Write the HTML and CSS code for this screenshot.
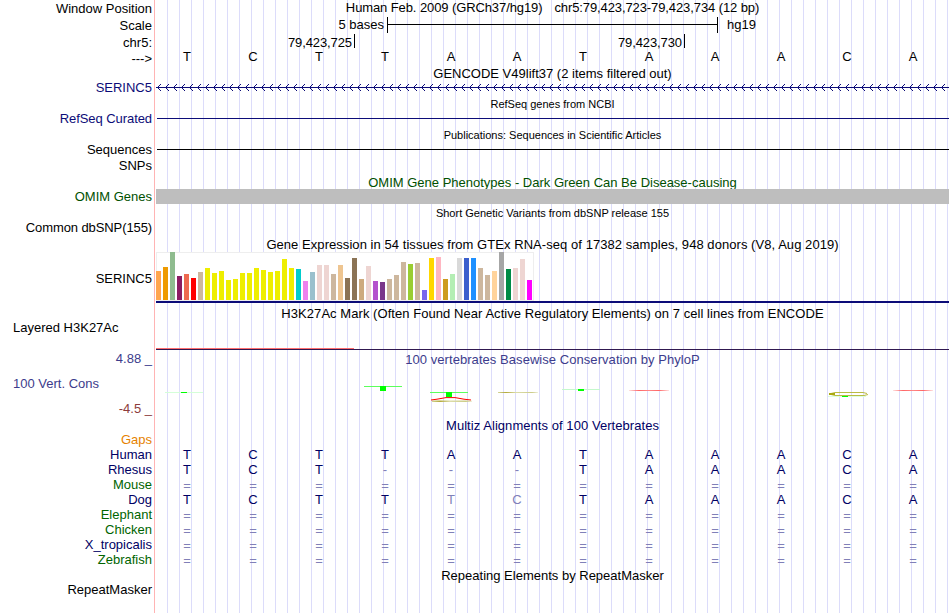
FILE: index.html
```html
<!DOCTYPE html>
<html lang="en">
<head>
  <meta charset="UTF-8">
  <title>Human chr5:79,423,723-79,423,734</title>
  <link rel="stylesheet" href="styles.css">
</head>
<body>
  <main class="browser">
    <section class="track ruler">
      <div class="labels">
        <div>Window Position</div>
        <div>Scale</div>
        <div>chr5:</div>
        <div class="strand">---&gt;</div>
      </div>
      <div class="data">
        <h2 class="position"><span>Human Feb. 2009 (GRCh37/hg19)</span><span>chr5:79,423,723-79,423,734 (12 bp)</span></h2>
        <div class="scale"><span class="scale-size">5 bases</span><span class="scale-bar"></span><span>hg19</span></div>
        <div class="ticks"><span class="tick first">79,423,725</span><span class="tick second">79,423,730</span></div>
        <div class="bases ref" data-seq="TCTTAATAAACA"></div>
      </div>
    </section>

    <section class="track gencode">
      <div class="labels navy"><div>SERINC5</div></div>
      <div class="data">
        <h2>GENCODE V49lift37 (2 items filtered out)</h2>
        <svg class="intron" width="793" height="7" shape-rendering="crispEdges">
          <defs>
            <pattern id="arrow" width="8" height="7" patternUnits="userSpaceOnUse">
              <path d="M1 3h1v1h-1zM2 2h1v1h-1zM3 1h1v1h-1zM4 0h1v1h-1zM2 4h1v1h-1zM3 5h1v1h-1zM4 6h1v1h-1zM0 3h8v1h-8z" fill="#0c0c78"/>
            </pattern>
          </defs>
          <rect width="793" height="7" fill="url(#arrow)"/>
        </svg>
      </div>
    </section>

    <section class="track refseq">
      <div class="labels navy"><div>RefSeq Curated</div></div>
      <div class="data">
        <h2 class="small">RefSeq genes from NCBI</h2>
        <div class="line navy-line"></div>
      </div>
    </section>

    <section class="track pubs">
      <div class="labels"><div>Sequences</div><div>SNPs</div></div>
      <div class="data">
        <h2 class="small">Publications: Sequences in Scientific Articles</h2>
        <div class="line"></div>
      </div>
    </section>

    <section class="track omim">
      <div class="labels green"><div>OMIM Genes</div></div>
      <div class="data">
        <h2 class="green">OMIM Gene Phenotypes - Dark Green Can Be Disease-causing</h2>
        <div class="omim-bar"></div>
      </div>
    </section>

    <section class="track dbsnp">
      <div class="labels"><div>Common dbSNP(155)</div></div>
      <div class="data">
        <h2 class="small">Short Genetic Variants from dbSNP release 155</h2>
      </div>
    </section>

    <section class="track gtex">
      <div class="labels"><div>SERINC5</div></div>
      <div class="data">
        <h2 class="wide">Gene Expression in 54 tissues from GTEx RNA-seq of 17382 samples, 948 donors (V8, Aug 2019)</h2>
        <div class="bars" id="bars"></div>
        <div class="gene-model"></div>
      </div>
    </section>

    <section class="track h3k">
      <div class="labels left"><div>Layered H3K27Ac</div></div>
      <div class="data">
        <h2 class="wide">H3K27Ac Mark (Often Found Near Active Regulatory Elements) on 7 cell lines from ENCODE</h2>
        <div class="signal"></div>
      </div>
    </section>

    <section class="track phylop">
      <div class="labels">
        <div class="max">4.88 _</div>
        <div class="name">100 Vert. Cons</div>
        <div class="min">-4.5 _</div>
      </div>
      <div class="data">
        <h2 class="wide">100 vertebrates Basewise Conservation by PhyloP</h2>
        <svg class="logo" width="793" height="24" viewBox="156 382 793 24">
          <defs>
            <linearGradient id="redFade"><stop offset="0" stop-color="#f66" stop-opacity=".2"/><stop offset=".25" stop-color="#f66"/><stop offset=".5" stop-color="#f88"/><stop offset=".75" stop-color="#f66"/><stop offset="1" stop-color="#f66" stop-opacity=".2"/></linearGradient>
            <linearGradient id="oliveFade"><stop offset="0" stop-color="#aa3" stop-opacity=".5"/><stop offset=".2" stop-color="#b4aa3c"/><stop offset=".45" stop-color="#dda"/><stop offset=".85" stop-color="#cc8"/><stop offset="1" stop-color="#cc8" stop-opacity=".3"/></linearGradient>
          </defs>
          <rect x="165" y="392" width="38" height="1" fill="#d4ffd8"/>
          <rect x="181" y="392" width="6" height="1" fill="#0f0"/>
          <rect x="364" y="386" width="38" height="1" fill="#5cff5c"/>
          <rect x="380" y="386" width="6" height="5" fill="#0f0"/>
          <rect x="430" y="392" width="38" height="1" fill="#5cff5c"/>
          <rect x="446" y="392" width="6" height="5" fill="#0f0"/>
          <path d="M431 400 L437 399.2 L446 397.6 H455 L464 399.2 L471 400" fill="none" stroke="#f00"/>
          <rect x="432" y="400.5" width="40" height="1.5" fill="url(#oliveFade)"/>
          <rect x="498" y="392" width="40" height="1" fill="url(#oliveFade)"/>
          <rect x="562" y="389" width="38" height="1" fill="#c4f8cc"/>
          <rect x="578" y="389" width="6" height="2" fill="#0f0"/>
          <rect x="629" y="390" width="40" height="1" fill="url(#redFade)"/>
          <path d="M868 394.5 L864 395.5 H835 L829 394 L835 392.5 H863 L867 393.5" fill="none" stroke="#bb4"/>
          <rect x="829" y="393" width="6" height="2" fill="#aa1"/>
          <rect x="828" y="396" width="38" height="1" fill="#dfd"/>
          <rect x="842" y="396" width="6" height="1" fill="#0f0"/>
          <rect x="893" y="390" width="40" height="1" fill="url(#redFade)"/>
        </svg>
      </div>
    </section>

    <section class="track multiz">
      <div class="labels">
        <div class="gaps">Gaps</div>
        <div class="near">Human</div>
        <div class="near">Rhesus</div>
        <div class="far">Mouse</div>
        <div class="near">Dog</div>
        <div class="far">Elephant</div>
        <div class="far">Chicken</div>
        <div class="near">X_tropicalis</div>
        <div class="far">Zebrafish</div>
      </div>
      <div class="data">
        <h2 class="wide">Multiz Alignments of 100 Vertebrates</h2>
        <div class="alignment">
          <div class="bases" data-seq="TCTTAATAAACA"></div>
          <div class="bases" data-seq="TCT---TAAACA"></div>
          <div class="bases unaligned" data-seq="============"></div>
          <div class="bases" data-seq="TCTTtcTAAACA"></div>
          <div class="bases unaligned" data-seq="============"></div>
          <div class="bases unaligned" data-seq="============"></div>
          <div class="bases unaligned" data-seq="============"></div>
          <div class="bases unaligned" data-seq="============"></div>
        </div>
      </div>
    </section>

    <section class="track rmsk">
      <div class="labels"><div>RepeatMasker</div></div>
      <div class="data">
        <h2>Repeating Elements by RepeatMasker</h2>
      </div>
    </section>
  </main>
  <script src="tracks.js"></script>
</body>
</html>
```
FILE: styles.css
```css
* {
  margin: 0;
  padding: 0;
  box-sizing: border-box;
}
body {
  width: 950px;
  height: 613px;
  overflow: hidden;
  background: #fff;
  color: #000;
  font-family: "Liberation Sans", Arial, sans-serif;
  font-size: 13px;
  line-height: 15px;
}
.browser {
  display: flex;
  flex-direction: column;
  width: 949px;
}
.track {
  display: flex;
}
.labels {
  width: 155px;
  padding-right: 2px;
  border-right: 1px solid #ffb4b4;
  text-align: right;
  white-space: nowrap;
}
.data {
  display: flex;
  flex-direction: column;
  width: 793px;
  margin-left: 1px;
  background: linear-gradient(to right, transparent 11px, #dcdcfa 11px) 0 0 / 12px 100%;
}
h2 {
  height: 15px;
  font-size: 13px;
  font-weight: normal;
  text-align: center;
  white-space: nowrap;
}
h2.small {
  font-size: 11px;
}
h2.wide {
  letter-spacing: 0.055px;
}
.navy {
  color: #0c0c78;
}
.green {
  color: #005000;
}
.line {
  height: 1px;
  margin: 7px 0 0 1px;
  background: #000;
}
.navy-line {
  background: #0c0c78;
}

/* ruler */
.ruler {
  height: 66px;
}
.ruler .labels {
  padding-top: 1px;
}
.ruler .labels div {
  height: 17px;
}
.ruler .labels .strand {
  height: 15px;
  line-height: 13px;
}
.position {
  display: flex;
  justify-content: center;
  gap: 12px;
  height: 17px;
  letter-spacing: -0.1px;
}
.scale {
  display: flex;
  height: 17px;
}
.scale-size {
  width: 228px;
  text-align: right;
}
.scale-bar {
  width: 331px;
  height: 16px;
  margin: 0 9px 0 3px;
  border: solid #000;
  border-width: 0 1px;
  background: linear-gradient(#000, #000) 0 7px / 100% 1px no-repeat;
}
.ticks {
  display: flex;
  height: 15px;
}
.tick {
  height: 14px;
  padding-right: 2px;
  border-right: 1px solid #000;
  line-height: 18px;
  letter-spacing: -0.1px;
  text-align: right;
}
.first {
  width: 199px;
}
.second {
  width: 330px;
}
.bases {
  display: flex;
  width: 792px;
  height: 15px;
  margin-left: -2px;
  color: #000064;
}
.bases span {
  width: 66px;
  text-align: center;
}
.bases .dim {
  color: #8080b8;
}
.unaligned {
  line-height: 17px;
}
.ref {
  color: #000;
}

/* gene tracks */
.gencode {
  height: 31px;
}
.gencode .labels {
  padding-top: 14px;
}
.intron {
  display: block;
  margin-top: 3px;
}
.refseq {
  height: 30px;
}
.refseq .labels {
  padding-top: 14px;
  letter-spacing: -0.07px;
}
.refseq h2 {
  margin-bottom: -1px;
}
.pubs {
  height: 48px;
}
.pubs .labels {
  padding-top: 15px;
}
.pubs .labels div {
  height: 16px;
}
.pubs h2,
.dbsnp h2 {
  line-height: 17px;
}
.omim {
  height: 30px;
}
.omim .labels {
  padding-top: 14px;
}
.omim-bar {
  height: 15px;
  margin-top: -1px;
  background: #bebebe;
  position: relative;
}
.dbsnp {
  height: 31px;
}
.dbsnp .labels {
  padding-top: 15px;
  letter-spacing: -0.1px;
}

/* expression */
.gtex {
  height: 69px;
}
.gtex .labels {
  padding-top: 35px;
}
.gtex .data,
.h3k .data {
  padding-top: 1px;
}
.bars {
  display: flex;
  align-items: flex-end;
  gap: 2px;
  width: 378px;
  height: 49px;
  padding-bottom: 1px;
  background: #fff;
  box-shadow: inset 0 0 0 1px #eee;
}
.bar {
  width: 5px;
}
.gene-model {
  height: 2px;
  background: #0c0c78;
}
.h3k {
  height: 46px;
}
.h3k .labels {
  padding-top: 15px;
}
.h3k .labels,
.phylop .name {
  padding-left: 13px;
  text-align: left;
}
.signal {
  height: 2px;
  margin-top: 27px;
  background:
    linear-gradient(#ff6e6e, #ff6e6e) 0 0 / 198px 1px no-repeat,
    linear-gradient(#301850, #301850) 0 1px / 100% 1px no-repeat;
}

/* conservation */
.phylop {
  height: 67px;
}
.phylop .labels,
.phylop h2 {
  color: #3c3c8c;
}
.phylop .labels div {
  height: 25px;
}
.phylop .labels .min {
  color: #8c3c3c;
}
.phylop h2 {
  line-height: 17px;
}
.logo {
  margin-top: 16px;
}
.multiz {
  height: 150px;
}
.multiz .labels {
  padding-top: 14px;
}
.multiz h2 {
  color: #000064;
}
.alignment {
  margin-top: 14px;
}
.gaps {
  color: #e68200;
}
.near {
  color: #000064;
}
.far {
  color: #006400;
}
.rmsk {
  height: 45px;
}
.rmsk .labels {
  padding-top: 14px;
}
```
FILE: tracks.js
```js
const tissues = [
  [29, '#ffa54f'], [33, '#ee9a00'], [48, '#8fbc8f'], [24, '#8b1c62'], [26, '#ee6a50'], [22, '#ff0000'],
  [28, '#cdb79e'], [32, '#eeee00'], [27, '#eeee00'], [29, '#eeee00'], [20, '#eeee00'], [21, '#eeee00'],
  [27, '#eeee00'], [27, '#eeee00'], [32, '#eeee00'], [30, '#eeee00'], [28, '#eeee00'], [29, '#eeee00'],
  [41, '#eeee00'], [32, '#eeee00'], [31, '#00cdcd'], [19, '#ee82ee'], [28, '#9ac0cd'], [35, '#eed5d2'],
  [35, '#eed5d2'], [26, '#cdb79e'], [35, '#eec591'], [22, '#8b7355'], [42, '#8b7355'], [21, '#cdaa7d'],
  [34, '#eed5d2'], [19, '#b452cd'], [18, '#7a378b'], [21, '#cdb79e'], [25, '#cdb79e'], [38, '#cdb79e'],
  [36, '#9acd32'], [37, '#cdb79e'], [10, '#7a67ee'], [42, '#ffd700'], [43, '#ffb6c1'], [21, '#cd9b1d'],
  [26, '#b4eeb4'], [42, '#d9d9d9'], [42, '#3a5fcd'], [42, '#1e90ff'], [32, '#cdb79e'], [25, '#cdb79e'],
  [29, '#ffd39b'], [48, '#a6a6a6'], [31, '#008b45'], [32, '#eed5d2'], [41, '#eed5d2'], [20, '#ff00ff']
];

const bars = document.getElementById('bars');
tissues.forEach(([height, color]) => {
  const bar = document.createElement('div');
  bar.className = 'bar';
  bar.style.height = height + 'px';
  bar.style.background = color;
  bars.appendChild(bar);
});

// lowercase letters are mismatches and are drawn dimmed, like gaps
document.querySelectorAll('.bases').forEach(row => {
  [...row.dataset.seq].forEach(base => {
    const cell = document.createElement('span');
    cell.textContent = base.toUpperCase();
    if (!/[A-Z]/.test(base)) cell.className = 'dim';
    if (/[a-z]/.test(base)) cell.className = 'dim';
    row.appendChild(cell);
  });
});
```
